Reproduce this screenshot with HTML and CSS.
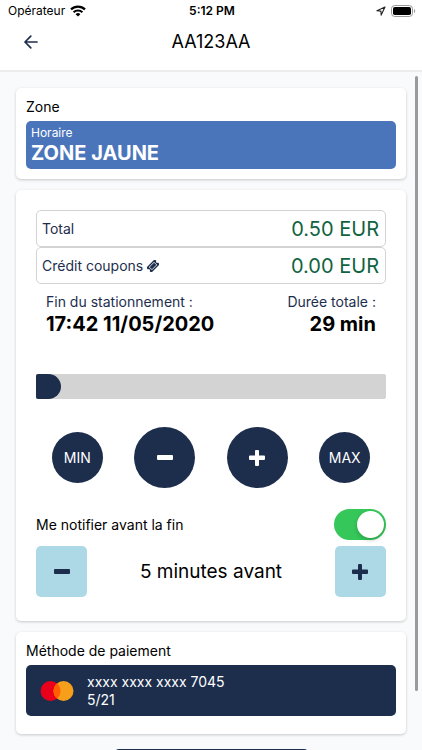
FILE: index.html
```html
<!DOCTYPE html>
<html lang="fr">
<head>
<meta charset="utf-8">
<meta name="viewport" content="width=device-width, initial-scale=1">
<title>AA123AA</title>
<link rel="stylesheet" href="styles.css">
</head>
<body>
<div class="status">
  <div class="carrier">
    <span>Opérateur</span>
    <svg width="16" height="12" viewBox="0 0 16 12" fill="none" stroke="#000" stroke-width="2.2" aria-hidden="true">
      <path d="M1 4.4a10 10 0 0 1 14 0"/>
      <path d="M3.6 7.3a6.3 6.3 0 0 1 8.8 0"/>
      <path d="M8 11.6 5.6 9.2a3.4 3.4 0 0 1 4.8 0z" fill="#000" stroke="none"/>
    </svg>
  </div>
  <span class="clock">5:12 PM</span>
  <div class="indicators">
    <svg width="10" height="10" viewBox="0 0 10 10" fill="none" stroke="#222" stroke-width="1.1" stroke-linejoin="round" aria-hidden="true">
      <path d="M9 1 .9 4.8l4 .3.3 4z"/>
    </svg>
    <svg width="25" height="12" viewBox="0 0 25 12" aria-hidden="true">
      <rect x=".5" y=".5" width="21" height="11" rx="3.2" fill="#fff" stroke="#999"/>
      <rect x="2" y="2" width="18" height="8" rx="1.8"/>
      <path d="M23 4v4c1.6-.5 1.6-3.5 0-4z" fill="#999"/>
    </svg>
  </div>
</div>
<header class="header">
  <button class="back" type="button" aria-label="Retour">
    <svg width="14" height="14" viewBox="0 0 14 14" fill="none" stroke="#1d2e4d" stroke-width="1.7" stroke-linecap="round" stroke-linejoin="round" aria-hidden="true">
      <path d="M13 7H1M6.8 1.2 1 7l5.8 5.8"/>
    </svg>
  </button>
  <h1>AA123AA</h1>
</header>
<main class="content">
  <section class="card">
    <h2>Zone</h2>
    <div class="zone">
      <span class="zone-label">Horaire</span>
      <strong>ZONE JAUNE</strong>
    </div>
  </section>

  <section class="card ticket">
    <dl class="amounts">
      <div><dt>Total</dt><dd>0.50 EUR</dd></div>
      <div>
        <dt>Crédit coupons
          <svg width="12" height="12" viewBox="0 0 12 12" aria-hidden="true">
            <g transform="rotate(-45 6 6)">
              <path d="M0 2.4h12v2.4a1.2 1.2 0 0 0 0 2.4v2.4H0V7.2a1.2 1.2 0 0 0 0-2.4z" fill="#1d2e4d"/>
              <rect x="2.6" y="4.1" width="6.8" height="3.8" fill="none" stroke="#fff" stroke-width=".8"/>
            </g>
          </svg>
        </dt>
        <dd>0.00 EUR</dd>
      </div>
    </dl>
    <dl class="times">
      <div><dt>Fin du stationnement :</dt><dd>17:42 11/05/2020</dd></div>
      <div class="duration"><dt>Durée totale :</dt><dd>29 min</dd></div>
    </dl>
    <input class="slider" type="range" min="0" max="100" value="0" aria-label="Durée du stationnement">
    <div class="steps">
      <button class="round" type="button">MIN</button>
      <button class="round large" type="button" aria-label="Réduire la durée">
        <svg width="16" height="16" viewBox="0 0 16 16" aria-hidden="true"><rect y="5" width="16" height="5" rx="1"/></svg>
      </button>
      <button class="round large" type="button" aria-label="Augmenter la durée">
        <svg width="16" height="16" viewBox="0 0 16 16" aria-hidden="true"><path d="M7 0h2a1 1 0 0 1 1 1v4.500h5a1 1 0 0 1 1 1V9a1 1 0 0 1-1 1h-5v5a1 1 0 0 1-1 1H7a1 1 0 0 1-1-1v-5H1a1 1 0 0 1-1-1V6.500a1 1 0 0 1 1-1h5V1a1 1 0 0 1 1-1z"/></svg>
      </button>
      <button class="round" type="button">MAX</button>
    </div>
    <div class="notify">
      <label for="notify">Me notifier avant la fin</label>
      <input class="switch" id="notify" type="checkbox" role="switch" checked>
    </div>
    <div class="delay">
      <button class="square" type="button" aria-label="Moins">
        <svg width="16" height="16" viewBox="0 0 16 16" aria-hidden="true"><rect y="5" width="16" height="5" rx="1"/></svg>
      </button>
      <output>5 minutes avant</output>
      <button class="square" type="button" aria-label="Plus">
        <svg width="16" height="16" viewBox="0 0 16 16" aria-hidden="true"><path d="M7 0h2a1 1 0 0 1 1 1v4.500h5a1 1 0 0 1 1 1V9a1 1 0 0 1-1 1h-5v5a1 1 0 0 1-1 1H7a1 1 0 0 1-1-1v-5H1a1 1 0 0 1-1-1V6.500a1 1 0 0 1 1-1h5V1a1 1 0 0 1 1-1z"/></svg>
      </button>
    </div>
  </section>

  <section class="card payment">
    <h2>Méthode de paiement</h2>
    <button class="method" type="button">
      <svg width="34" height="20" viewBox="0 0 34 20" aria-hidden="true">
        <circle cx="10.5" cy="10" r="10" fill="#eb001b"/>
        <circle cx="23.5" cy="10" r="10" fill="#f79e1b"/>
        <path d="M17 2.4a10 10 0 0 1 0 15.2 10 10 0 0 1 0-15.2z" fill="#ff5f00"/>
      </svg>
      <span>xxxx xxxx xxxx 7045<br>5/21</span>
    </button>
  </section>
  <button class="confirm" type="button" aria-label="Valider"></button>
  <div class="scrollbar"></div>
</main>
</body>
</html>
```
FILE: styles.css
```css
* {
  box-sizing: border-box;
}

body {
  display: flex;
  flex-direction: column;
  height: 100vh;
  margin: 0;
  overflow: hidden;
  background: #fff;
  color: #000;
  font-family: Inter, "Liberation Sans", sans-serif;
  font-size: 14px;
  line-height: 18px;
}

h1, h2, dl, dt, dd {
  margin: 0;
  font-weight: 400;
}

button {
  padding: 0;
  border: 0;
  font: inherit;
}

svg {
  flex: none;
}

.status {
  display: grid;
  grid-template-columns: 1fr auto 1fr;
  align-items: center;
  flex: none;
  height: 22px;
  padding: 0 6px 0 8px;
  font-size: 12px;
}

.carrier,
.indicators {
  display: flex;
  align-items: center;
  gap: 5px;
}

.indicators {
  justify-content: flex-end;
}

.clock {
  font-weight: 600;
}

.header {
  display: grid;
  grid-template-columns: 62px 1fr 62px;
  align-items: center;
  flex: none;
  height: 50px;
  padding-bottom: 9px;
  border-bottom: 2px solid #ececed;
}

.header h1 {
  font-size: 18px;
  line-height: 24px;
  text-align: center;
}

.back {
  display: grid;
  place-items: center;
  height: 32px;
  background: none;
}

.content {
  position: relative;
  display: flex;
  flex-direction: column;
  flex: 1;
  gap: 11px;
  min-height: 0;
  padding: 16px 16px 0;
  overflow: hidden;
  background: #f9fafc;
}

.card {
  flex: none;
  padding: 10px;
  border-radius: 5px;
  background: #fff;
  box-shadow: 0 1px 3px #0003;
}

.card h2 {
  margin-bottom: 5px;
  font-size: 14px;
}

.zone {
  display: flex;
  flex-direction: column;
  padding: 4px 5px;
  border-radius: 5px;
  background: #4a75bb;
  color: #fff;
}

.zone-label {
  font-size: 12px;
  line-height: 16px;
}

.zone strong {
  font-size: 20px;
  line-height: 24px;
}

.ticket {
  padding: 20px 20px 24px;
}

.amounts div {
  display: flex;
  align-items: center;
  justify-content: space-between;
  height: 37px;
  padding: 0 6px 0 5px;
  border: 1px solid #d3d3d3;
  border-radius: 5px;
}

.amounts dt,
.times dt {
  color: #1d2e4d;
}

.amounts dt svg {
  vertical-align: -1px;
}

.amounts dd {
  color: #11633f;
  font-size: 20px;
}

.times {
  display: flex;
  justify-content: space-between;
  padding: 9px 10px 0;
}

.times dd {
  font-size: 20px;
  font-weight: 700;
  line-height: 26px;
}

.duration {
  text-align: right;
}

.slider {
  display: block;
  width: 100%;
  height: 25px;
  margin: 37px 0 28px;
  appearance: none;
  border-radius: 2px;
  background: #d3d3d3;
}

.slider::-webkit-slider-thumb {
  width: 25px;
  height: 25px;
  appearance: none;
  border-radius: 2px 13px 13px 2px;
  background: #1d2e4d;
}

.steps {
  display: flex;
  align-items: center;
  justify-content: space-around;
}

.round {
  display: grid;
  place-items: center;
  width: 51px;
  height: 51px;
  border-radius: 50%;
  background: #1d2e4d;
  color: #fff;
}

.large {
  width: 61px;
  height: 61px;
}

button svg {
  fill: currentColor;
}

.back svg {
  fill: none;
}

.notify {
  display: flex;
  align-items: center;
  justify-content: space-between;
  margin: 21px 0 6px;
}

.switch {
  width: 52px;
  height: 31px;
  margin: 0;
  padding: 2px;
  appearance: none;
  border-radius: 16px;
  background: #d3d3d3;
}

.switch::before {
  display: block;
  width: 27px;
  height: 27px;
  border-radius: 50%;
  background: #fff;
  box-shadow: 0 2px 4px #0003;
  content: "";
}

.switch:checked {
  background: #35c759;
}

.switch:checked::before {
  margin-left: auto;
}

.delay {
  display: flex;
  align-items: center;
  justify-content: space-between;
  font-size: 19px;
}

.square {
  display: grid;
  place-items: center;
  width: 51px;
  height: 51px;
  border-radius: 5px;
  background: #add8e6;
  color: #1d2e4d;
}

.payment {
  padding-bottom: 18px;
}

.method {
  display: flex;
  align-items: center;
  gap: 13px;
  width: 100%;
  height: 51px;
  padding: 0 14px;
  border-radius: 5px;
  background: #1d2e4d;
  color: #fff;
  text-align: left;
}

.confirm {
  flex: none;
  align-self: center;
  width: 50%;
  height: 48px;
  margin-top: 4px;
  border-radius: 5px;
  background: #1d2e4d;
}

.scrollbar {
  position: absolute;
  top: 4px;
  right: 4px;
  bottom: 59px;
  width: 3px;
  border-radius: 2px;
  background: #999a9d;
}
```
